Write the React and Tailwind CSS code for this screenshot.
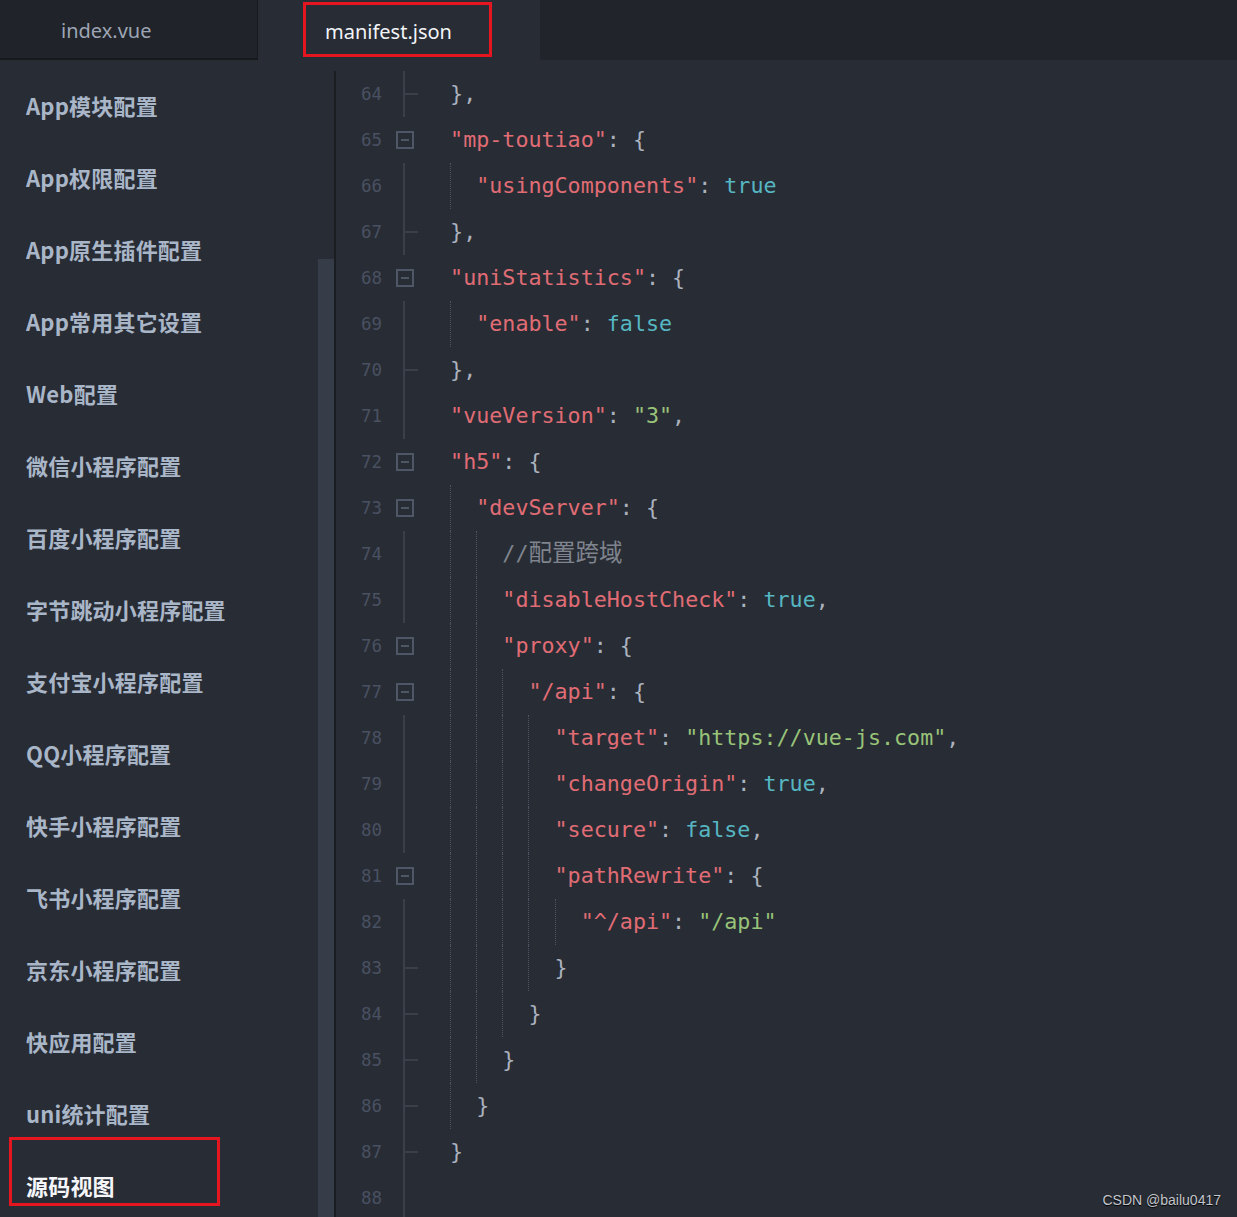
import React from "react";

const menu = [
    "App模块配置",
    "App权限配置",
    "App原生插件配置",
    "App常用其它设置",
    "Web配置",
    "微信小程序配置",
    "百度小程序配置",
    "字节跳动小程序配置",
    "支付宝小程序配置",
    "QQ小程序配置",
    "快手小程序配置",
    "飞书小程序配置",
    "京东小程序配置",
    "快应用配置",
    "uni统计配置",
    "源码视图",
];

// k = key, s = string, b = boolean, p = punctuation, c = comment, cj = comment cjk
const tone = {
    k: "text-[#e06c75]",
    s: "text-[#98c379]",
    b: "text-[#56b6c2]",
    p: "text-[#abb2bf]",
    c: "text-[#7f848e]",
    cj: "text-[#7f848e] text-[23.5px]",
};

const lines = [
    { n: 64, lv: 1, g: "end", t: [["p", "},"]] },
    { n: 65, lv: 1, g: "fold", t: [["k", '"mp-toutiao"'], ["p", ": {"]] },
    { n: 66, lv: 2, g: "line", t: [["k", '"usingComponents"'], ["p", ": "], ["b", "true"]] },
    { n: 67, lv: 1, g: "end", t: [["p", "},"]] },
    { n: 68, lv: 1, g: "fold", t: [["k", '"uniStatistics"'], ["p", ": {"]] },
    { n: 69, lv: 2, g: "line", t: [["k", '"enable"'], ["p", ": "], ["b", "false"]] },
    { n: 70, lv: 1, g: "end", t: [["p", "},"]] },
    { n: 71, lv: 1, g: "line", t: [["k", '"vueVersion"'], ["p", ": "], ["s", '"3"'], ["p", ","]] },
    { n: 72, lv: 1, g: "fold", t: [["k", '"h5"'], ["p", ": {"]] },
    { n: 73, lv: 2, g: "fold", t: [["k", '"devServer"'], ["p", ": {"]] },
    { n: 74, lv: 3, g: "line", t: [["c", "//"], ["cj", "配置跨域"]] },
    { n: 75, lv: 3, g: "line", t: [["k", '"disableHostCheck"'], ["p", ": "], ["b", "true"], ["p", ","]] },
    { n: 76, lv: 3, g: "fold", t: [["k", '"proxy"'], ["p", ": {"]] },
    { n: 77, lv: 4, g: "fold", t: [["k", '"/api"'], ["p", ": {"]] },
    { n: 78, lv: 5, g: "line", t: [["k", '"target"'], ["p", ": "], ["s", '"https://vue-js.com"'], ["p", ","]] },
    { n: 79, lv: 5, g: "line", t: [["k", '"changeOrigin"'], ["p", ": "], ["b", "true"], ["p", ","]] },
    { n: 80, lv: 5, g: "line", t: [["k", '"secure"'], ["p", ": "], ["b", "false"], ["p", ","]] },
    { n: 81, lv: 5, g: "fold", t: [["k", '"pathRewrite"'], ["p", ": {"]] },
    { n: 82, lv: 6, g: "line", t: [["k", '"^/api"'], ["p", ": "], ["s", '"/api"']] },
    { n: 83, lv: 5, g: "end", t: [["p", "}"]] },
    { n: 84, lv: 4, g: "end", t: [["p", "}"]] },
    { n: 85, lv: 3, g: "end", t: [["p", "}"]] },
    { n: 86, lv: 2, g: "end", t: [["p", "}"]] },
    { n: 87, lv: 1, g: "end", t: [["p", "}"]] },
    { n: 88, lv: 0, g: "line", t: [] },
];

const Gutter = ({ type }) => {
    if (type === "fold") {
        return (
            <div className="w-[40px] flex items-center pl-[12px]">
                <div className="w-[18px] h-[18px] border-2 border-[#4f5666] flex items-center justify-center">
                    <div className="w-[8px] h-[2px] bg-[#4f5666]" />
                </div>
            </div>
        );
    }
    return (
        <div className="w-[40px] flex pl-[19px]">
            <div className="w-[2px] h-full bg-[#3a3f4a]" />
            {type === "end" && (
                <div className="flex items-center">
                    <div className="w-[13px] h-[2px] bg-[#3a3f4a]" />
                </div>
            )}
        </div>
    );
};

const CodeLine = ({ line }) => (
    <div className="flex h-[46px]">
        <div className="w-[48px] pr-[2px] flex items-center justify-end text-[17.5px] text-[#495162]">
            {line.n}
        </div>
        <Gutter type={line.g} />
        <div className="flex flex-1">
            {Array.from({ length: line.lv }).map((_, i) => (
                <div
                    key={i}
                    className={
                        i === 0
                            ? "w-[2ch] flex-none"
                            : "w-[2ch] flex-none border-l border-dotted border-[#4d5360]"
                    }
                />
            ))}
            <div className="flex items-center whitespace-pre">
                {line.t.map(([kind, text], i) => (
                    <span key={i} className={tone[kind]}>
                        {text}
                    </span>
                ))}
            </div>
        </div>
    </div>
);

const App = () => {
    return (
        <div className="relative w-[1237px] h-[1217px] overflow-hidden bg-[#282c34] flex flex-col font-['Noto_Sans',sans-serif]">
            {/* tabs */}
            <div className="h-[60px] flex flex-none text-[20px]">
                <div className="w-[258px] bg-[#202329] border-b-2 border-r border-[#17191d] flex items-center pl-[61px] pt-[4px] text-[#9da5b4]">
                    index.vue
                </div>
                <div className="relative w-[282px] bg-[#282c34] flex items-center pl-[67px] pt-[3px] text-[#f2f4f7]">
                    manifest.json
                    <div className="absolute left-[45px] top-[2px] w-[189px] h-[55px] border-[3px] border-[#e5161f]" />
                </div>
                <div className="flex-1 bg-[#21252b]" />
            </div>

            <div className="flex flex-1 min-h-0">
                {/* settings menu */}
                <div className="w-[334px] flex flex-none">
                    <div className="w-[318px] pt-[9px] font-['Noto_Sans_CJK_SC',sans-serif]">
                        {menu.map((item, index) => (
                            <div
                                key={index}
                                className={`relative h-[72px] flex items-center pl-[26px] text-[22px] font-bold tracking-[0.2px] ${
                                    index === menu.length - 1 ? "text-[#f4f6fa]" : "text-[#a9b6c8]"
                                }`}
                            >
                                {item}
                                {index === menu.length - 1 && (
                                    <div className="absolute left-[9px] top-[-12px] w-[211px] h-[69px] border-[3px] border-[#e5161f]" />
                                )}
                            </div>
                        ))}
                    </div>
                    <div className="w-[16px] pt-[199px] flex flex-col">
                        <div className="flex-1 bg-[#363c48]" />
                    </div>
                </div>
                <div className="w-[2px] mt-[11px] bg-[#1a1d22] flex-none" />

                {/* editor */}
                <div className="flex-1 pt-[11px] overflow-hidden font-['DejaVu_Sans_Mono','Noto_Sans_CJK_SC',monospace] text-[21.7px]">
                    {lines.map((line) => (
                        <CodeLine key={line.n} line={line} />
                    ))}
                </div>
            </div>

            <div className="absolute right-[16px] bottom-[6px] text-[14px] text-[#c3c6cc] font-['Liberation_Sans',sans-serif] [text-shadow:0_1px_1px_#000]">
                CSDN @bailu0417
            </div>
        </div>
    );
};

export default App;
